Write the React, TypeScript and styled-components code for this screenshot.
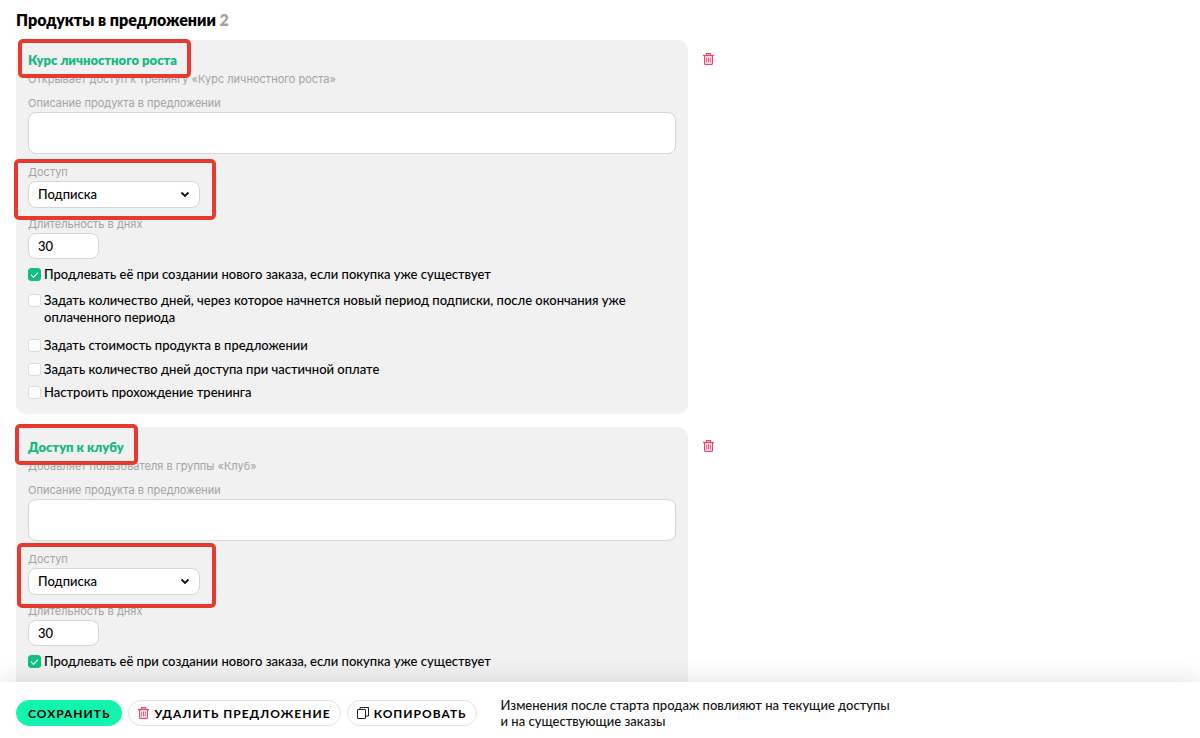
import React, { useId, useState } from "react";
import styled, { createGlobalStyle, css } from "styled-components";

const font = `Lato, "Noto Sans", sans-serif`;
const smallFont = `Inter, "Noto Sans", sans-serif`;

const GlobalStyle = createGlobalStyle`
  *, *::before, *::after { box-sizing: border-box; }
  body {
    margin: 0;
    background: #fff;
    color: #000;
    font: 500 13px/17px ${font};
  }
  button, input, select, textarea { font: inherit; color: inherit; }
`;

const Page = styled.div`
  display: flex;
  flex-direction: column;
  height: 100vh;
`;

const Content = styled.main`
  display: flex;
  flex-direction: column;
  flex: 1;
  min-height: 0;
  padding: 10px 16px 0;
  overflow-y: auto;
  scrollbar-width: none;
`;

const Heading = styled.h1`
  margin: 0 0 10px;
  font-size: 16px;
  line-height: 20px;
  font-weight: 800;
`;

const Count = styled.span`
  color: #a3a3a3;
`;

const ProductRow = styled.section`
  display: flex;
  gap: 15px;
  margin-bottom: 13px;

  &:last-child {
    flex: 1 0 auto;
    margin-bottom: 0;
  }
`;

const Card = styled.div`
  display: flex;
  flex-direction: column;
  align-items: flex-start;
  flex: 0 1 672px;
  min-width: 0;
  padding: 11px 12px 13px;
  border-radius: 10px;
  background: #f1f1f1;

  ${ProductRow}:last-child & {
    padding-bottom: 0;
    border-radius: 10px 10px 0 0;
  }
`;

const Marked = styled.div<{ $gap?: number }>`
  position: relative;
  margin-bottom: ${({ $gap = 0 }) => $gap}px;
`;

type Inset = [number, number, number, number];

const Frame = styled.span<{ $inset: Inset }>`
  position: absolute;
  z-index: 1;
  inset: ${({ $inset }) => $inset.map((n) => `${-n}px`).join(" ")};
  border: 4px solid #e63a2f;
  border-radius: 5px;
  pointer-events: none;
`;

const ProductLink = styled.a`
  display: block;
  line-height: 18px;
  font-weight: 800;
  color: #13b981;
  text-decoration: none;
`;

const Note = styled.p`
  margin: 2px 0 8px;
  font: 400 11px/16px ${smallFont};
  color: #a3a3a3;
`;

const Field = styled.div<{ $wide?: boolean; $gap?: number }>`
  display: flex;
  flex-direction: column;
  align-items: flex-start;
  margin-bottom: ${({ $gap = 0 }) => $gap}px;
  ${({ $wide }) => $wide && css`width: 100%;`}
`;

const Label = styled.label`
  margin-bottom: 1px;
  font: 400 11px/16px ${smallFont};
  color: #a3a3a3;
`;

const control = css`
  border: 1px solid #d6d6d6;
  border-radius: 8px;
  background: #fff;
  outline: none;
`;

const TextArea = styled.textarea`
  ${control}
  display: block;
  width: 100%;
  height: 42px;
  padding: 6px 9px;
  resize: none;
`;

const SelectBox = styled.div`
  position: relative;
`;

const Select = styled.select`
  ${control}
  display: block;
  width: 172px;
  height: 27px;
  padding: 0 30px 0 9px;
  appearance: none;
`;

const Chevron = styled.svg`
  position: absolute;
  top: 10px;
  right: 10px;
  pointer-events: none;
`;

const DaysInput = styled.input`
  ${control}
  width: 71px;
  height: 26px;
  padding: 0 9px;
`;

const CheckRow = styled.label<{ $gap: number }>`
  display: flex;
  align-items: flex-start;
  gap: 3px;
  margin-bottom: ${({ $gap }) => $gap}px;
`;

const CheckBox = styled.input`
  flex: none;
  width: 13px;
  height: 13px;
  margin: 2px 0 0;
  border: 1px solid #dcdcdc;
  border-radius: 3px;
  background: #fff;
  appearance: none;
  display: grid;
  place-items: center;

  &:checked {
    border-color: #11bd86;
    background: #11bd86;
  }
  &:checked::before {
    content: "";
    width: 7px;
    height: 4px;
    margin-bottom: 2px;
    border: solid #fff;
    border-width: 0 0 1px 1px;
    transform: rotate(-45deg);
  }
`;

const IconButton = styled.button`
  display: flex;
  align-self: flex-start;
  margin-top: 13px;
  padding: 0;
  border: 0;
  background: none;
`;

const Footer = styled.footer`
  position: relative;
  display: flex;
  align-items: center;
  gap: 6px;
  flex: none;
  min-height: 56px;
  padding: 6px 16px 0;
  background: #fff;
  box-shadow: 0 0 24px rgba(0, 30, 20, 0.14);
`;

const Button = styled.button<{ $primary?: boolean }>`
  display: flex;
  align-items: center;
  gap: 5px;
  height: 26px;
  padding: 0 ${({ $primary }) => ($primary ? 11 : 9)}px;
  border: 1px solid ${({ $primary }) => ($primary ? "#12f3ae" : "#e2e2e2")};
  border-radius: 13px;
  background: ${({ $primary }) => ($primary ? "#12f3ae" : "#fff")};
  font-size: 12px;
  font-weight: 700;
  letter-spacing: 1px;
  text-transform: uppercase;
  white-space: nowrap;
`;

const Hint = styled.p`
  max-width: 400px;
  margin: 0 0 0 18px;
  line-height: 16px;
  color: #111;
`;

const TrashIcon = () => (
  <svg width="11" height="12" viewBox="0 0 11 12" fill="none" stroke="#f0416c" aria-hidden="true">
    <path d="M0 2.500h11" strokeWidth="1.300" />
    <path d="M3.500 2V.6h4V2" strokeWidth="1.200" />
    <path d="M1.600 3v7.400q0 1 1 1h5.800q1 0 1-1V3" strokeWidth="1.200" />
    <path d="M3.700 4.500v5M5.500 4.500v5M7.300 4.500v5" strokeWidth=".9" />
  </svg>
);

const CopyIcon = () => (
  <svg width="12" height="12" viewBox="0 0 12 12" fill="none" stroke="#222" aria-hidden="true">
    <rect x=".5" y="2.500" width="8" height="9" rx=".5" />
    <path d="M3 2.500V.5h8.500v8.500h-3" />
  </svg>
);

type Option = { text: string; gap: number; checked?: boolean };
type Product = { title: string; note: string; titleFrame: Inset; accessFrame: Inset; options: Option[] };

const prolong: Option = {
  text: "Продлевать её при создании нового заказа, если покупка уже существует",
  gap: 9,
  checked: true,
};

const products: Product[] = [
  {
    title: "Курс личностного роста",
    note: "Открывает доступ к тренингу «Курс личностного роста»",
    titleFrame: [12, 14, 9, 10],
    accessFrame: [5, 16, 12, 14],
    options: [
      prolong,
      {
        text: "Задать количество дней, через которое начнется новый период подписки, после окончания уже оплаченного периода",
        gap: 11,
      },
      { text: "Задать стоимость продукта в предложении", gap: 7 },
      { text: "Задать количество дней доступа при частичной оплате", gap: 6 },
      { text: "Настроить прохождение тренинга", gap: 0 },
    ],
  },
  {
    title: "Доступ к клубу",
    note: "Добавляет пользователя в группы «Клуб»",
    titleFrame: [14, 14, 9, 13],
    accessFrame: [8, 16, 13, 11],
    options: [prolong],
  },
];

function ProductCard({ title, note, titleFrame, accessFrame, options }: Product) {
  const id = useId();
  const [days, setDays] = useState("30");
  return (
    <ProductRow>
      <Card>
        <Marked>
          <ProductLink href="#">{title}</ProductLink>
          <Frame $inset={titleFrame} />
        </Marked>
        <Note>{note}</Note>
        <Field $wide $gap={10}>
          <Label htmlFor={`${id}d`}>Описание продукта в предложении</Label>
          <TextArea id={`${id}d`} />
        </Field>
        <Marked $gap={8}>
          <Field>
            <Label htmlFor={`${id}a`}>Доступ</Label>
            <SelectBox>
              <Select id={`${id}a`} defaultValue="sub">
                <option value="sub">Подписка</option>
              </Select>
              <Chevron width="10" height="7" viewBox="0 0 10 7" fill="none" stroke="#111" strokeWidth="1.800">
                <path d="M1.500 1.500 5 5l3.500-3.500" />
              </Chevron>
            </SelectBox>
          </Field>
          <Frame $inset={accessFrame} />
        </Marked>
        <Field $gap={7}>
          <Label htmlFor={`${id}n`}>Длительность в днях</Label>
          <DaysInput id={`${id}n`} value={days} onChange={(e) => setDays(e.target.value)} />
        </Field>
        {options.map(({ text, gap, checked }) => (
          <CheckRow key={text} $gap={gap}>
            <CheckBox type="checkbox" defaultChecked={checked} />
            <span>{text}</span>
          </CheckRow>
        ))}
      </Card>
      <IconButton type="button" aria-label="Удалить продукт">
        <TrashIcon />
      </IconButton>
    </ProductRow>
  );
}

export default function App() {
  return (
    <Page>
      <GlobalStyle />
      <Content>
        <Heading>
          Продукты в предложении <Count>{products.length}</Count>
        </Heading>
        {products.map((product) => (
          <ProductCard key={product.title} {...product} />
        ))}
      </Content>
      <Footer>
        <Button type="button" $primary>
          Сохранить
        </Button>
        <Button type="button">
          <TrashIcon />
          Удалить предложение
        </Button>
        <Button type="button">
          <CopyIcon />
          Копировать
        </Button>
        <Hint>Изменения после старта продаж повлияют на текущие доступы и&nbsp;на существующие заказы</Hint>
      </Footer>
    </Page>
  );
}
